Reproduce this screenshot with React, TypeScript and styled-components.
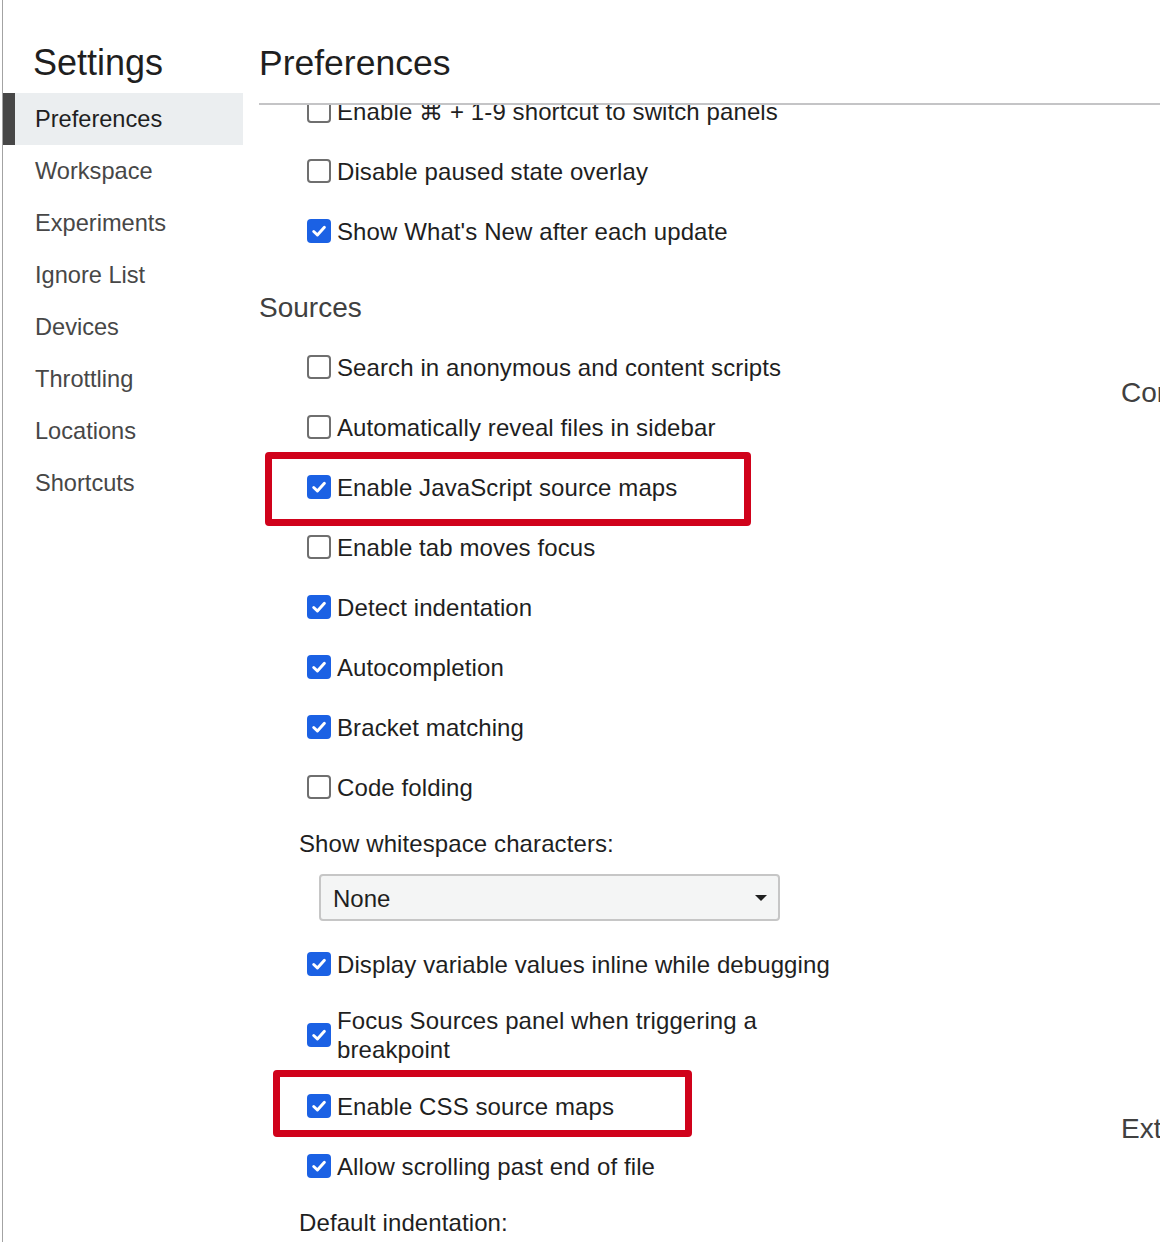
import React from "react";
import styled, { createGlobalStyle } from "styled-components";

const Global = createGlobalStyle`
  html, body { margin: 0; padding: 0; background: #fff; overflow: hidden; }
  body { font-family: "Liberation Sans", "DejaVu Sans", Arial, sans-serif; color: #1f1f1f; }
`;

const Root = styled.div`
  display: flex;
  height: 1242px;
  width: 1160px;
  padding-left: 2px;
  box-sizing: border-box;
  overflow: hidden;
`;

const Sidebar = styled.nav`
  flex: 0 0 240px;
  border-left: 1px solid #a3a3a3;
  display: flex;
  flex-direction: column;
`;

const SideTitle = styled.h1`
  margin: 0;
  padding: 42px 0 9px 30px;
  font-size: 36px;
  line-height: 42px;
  font-weight: 400;
  color: #1f1f1f;
`;

const NavItem = styled.div<{ $active?: boolean }>`
  height: 52px;
  line-height: 53px;
  font-size: 23.6px;
  box-sizing: border-box;
  padding-left: ${(p) => (p.$active ? "20px" : "32px")};
  border-left: ${(p) => (p.$active ? "12px solid #474747" : "none")};
  background: ${(p) => (p.$active ? "#ebeef0" : "transparent")};
  color: ${(p) => (p.$active ? "#1f1f1f" : "#474747")};
`;

const Main = styled.main`
  flex: 1;
  min-width: 0;
  padding-left: 16px;
  display: flex;
  flex-direction: column;
`;

const MainHeader = styled.header`
  padding: 42px 0 19px 0;
  border-bottom: 2px solid #c4c4c6;
`;

const MainTitle = styled.h2`
  margin: 0;
  font-size: 35.5px;
  line-height: 42px;
  font-weight: 400;
  color: #1f1f1f;
`;

const Scroller = styled.div`
  flex: 1;
  overflow: hidden;
`;

const Columns = styled.div`
  display: grid;
  grid-template-columns: 862px 860px;
  margin-top: -24px;
`;

const Column = styled.div<{ $offset?: number }>`
  display: flex;
  flex-direction: column;
  padding-top: ${(p) => p.$offset ?? 0}px;
`;

const SectionTitle = styled.h3`
  margin: 0;
  padding: 31px 0 13px 0;
  font-size: 28px;
  line-height: 32px;
  font-weight: 400;
  color: #404040;
`;

const Row = styled.label`
  position: relative;
  display: flex;
  align-items: center;
  min-height: 60px;
  box-sizing: border-box;
  padding: 12px 0 12px 48px;
  font-size: 24px;
  line-height: 29px;
  letter-spacing: 0.1px;
  color: #1f1f1f;
  white-space: nowrap;
`;

const RowText = styled.span<{ $wrap?: boolean }>`
  white-space: ${(p) => (p.$wrap ? "normal" : "nowrap")};
  max-width: ${(p) => (p.$wrap ? "440px" : "none")};
`;

const Box = styled.span<{ $checked?: boolean }>`
  flex: 0 0 auto;
  width: 24px;
  height: 24px;
  margin-right: 6px;
  box-sizing: border-box;
  border-radius: 4px;
  display: inline-flex;
  align-items: center;
  justify-content: center;
  background: ${(p) => (p.$checked ? "#1b61e4" : "#fff")};
  border: ${(p) => (p.$checked ? "none" : "2px solid #6f6f6f")};
`;

const Highlight = styled.span<{ $top: number; $left: number; $w: number; $h: number }>`
  position: absolute;
  top: ${(p) => p.$top}px;
  left: ${(p) => p.$left}px;
  width: ${(p) => p.$w}px;
  height: ${(p) => p.$h}px;
  box-sizing: border-box;
  border: 7px solid #d0021b;
  border-radius: 4px;
  pointer-events: none;
`;

const FieldLabel = styled.div`
  padding: 12px 0 0 40px;
  font-size: 24px;
  line-height: 29px;
  letter-spacing: 0.1px;
  color: #1f1f1f;
  white-space: nowrap;
`;

const SelectWrap = styled.div`
  margin: 16px 0 13px 60px;
  width: 461px;
  height: 47px;
  box-sizing: border-box;
  border: 2px solid #c6c6c6;
  border-radius: 4px;
  background: #f4f5f5;
  display: flex;
  align-items: center;
  justify-content: space-between;
  padding: 2px 11px 0 12px;
  font-size: 24px;
  color: #1f1f1f;
`;

const Arrow = styled.span`
  width: 0;
  height: 0;
  margin-top: -2px;
  border-left: 6px solid transparent;
  border-right: 6px solid transparent;
  border-top: 6px solid #1f1f1f;
`;

function Check({ checked }: { checked?: boolean }) {
  return (
    <Box $checked={checked}>
      {checked && (
        <svg width="18" height="18" viewBox="0 0 16 16">
          <path d="M3.3 8.4 L6.6 11.6 L12.8 4.7" fill="none" stroke="#fff" strokeWidth="2.6" strokeLinecap="round" strokeLinejoin="round" />
        </svg>
      )}
    </Box>
  );
}

type Item = { text: string; checked?: boolean; wrap?: boolean; mark?: [number, number, number, number] };

function CheckRow({ text, checked, wrap, mark }: Item) {
  return (
    <Row>
      <Check checked={checked} />
      <RowText $wrap={wrap}>{text}</RowText>
      {mark && <Highlight $top={mark[0]} $left={mark[1]} $w={mark[2]} $h={mark[3]} />}
    </Row>
  );
}

const appearanceTail: Item[] = [
  { text: "Enable ⌘ + 1-9 shortcut to switch panels" },
  { text: "Disable paused state overlay" },
  { text: "Show What's New after each update", checked: true },
];

const sourcesA: Item[] = [
  { text: "Search in anonymous and content scripts" },
  { text: "Automatically reveal files in sidebar" },
  { text: "Enable JavaScript source maps", checked: true, mark: [-5, 6, 486, 74] },
  { text: "Enable tab moves focus" },
  { text: "Detect indentation", checked: true },
  { text: "Autocompletion", checked: true },
  { text: "Bracket matching", checked: true },
  { text: "Code folding" },
];

const sourcesB: Item[] = [
  { text: "Display variable values inline while debugging", checked: true },
  { text: "Focus Sources panel when triggering a breakpoint", checked: true, wrap: true },
  { text: "Enable CSS source maps", checked: true, mark: [-6, 14, 419, 67] },
  { text: "Allow scrolling past end of file", checked: true },
];

const consoleItems: Item[] = [
  { text: "Hide network messages" },
  { text: "Selected context only" },
  { text: "Group similar messages in console", checked: true },
  { text: "Show CORS errors in console", checked: true },
  { text: "Log XMLHttpRequests" },
  { text: "Show timestamps" },
  { text: "Autocomplete from history", checked: true },
  { text: "Accept autocomplete suggestion on Enter", checked: true },
  { text: "Eager evaluation", checked: true },
  { text: "Evaluate triggers user activation", checked: true },
  { text: "Expand console.trace() messages by default", checked: true },
];

const nav = ["Preferences", "Workspace", "Experiments", "Ignore List", "Devices", "Throttling", "Locations", "Shortcuts"];

export default function App() {
  return (
    <>
      <Global />
      <Root>
        <Sidebar>
          <SideTitle>Settings</SideTitle>
          {nav.map((n, i) => (
            <NavItem key={n} $active={i === 0}>
              {n}
            </NavItem>
          ))}
        </Sidebar>
        <Main>
          <MainHeader>
            <MainTitle>Preferences</MainTitle>
          </MainHeader>
          <Scroller>
            <Columns>
              <Column>
                {appearanceTail.map((it) => (
                  <CheckRow key={it.text} {...it} />
                ))}
                <SectionTitle>Sources</SectionTitle>
                {sourcesA.map((it) => (
                  <CheckRow key={it.text} {...it} />
                ))}
                <FieldLabel>Show whitespace characters:</FieldLabel>
                <SelectWrap>
                  <span>None</span>
                  <Arrow />
                </SelectWrap>
                {sourcesB.map((it) => (
                  <CheckRow key={it.text} {...it} />
                ))}
                <FieldLabel>Default indentation:</FieldLabel>
              </Column>
              <Column $offset={265}>
                <SectionTitle>Console</SectionTitle>
                {consoleItems.map((it) => (
                  <CheckRow key={it.text} {...it} />
                ))}
                <SectionTitle>Extensions</SectionTitle>
                <FieldLabel>Link handling:</FieldLabel>
              </Column>
            </Columns>
          </Scroller>
        </Main>
      </Root>
    </>
  );
}
